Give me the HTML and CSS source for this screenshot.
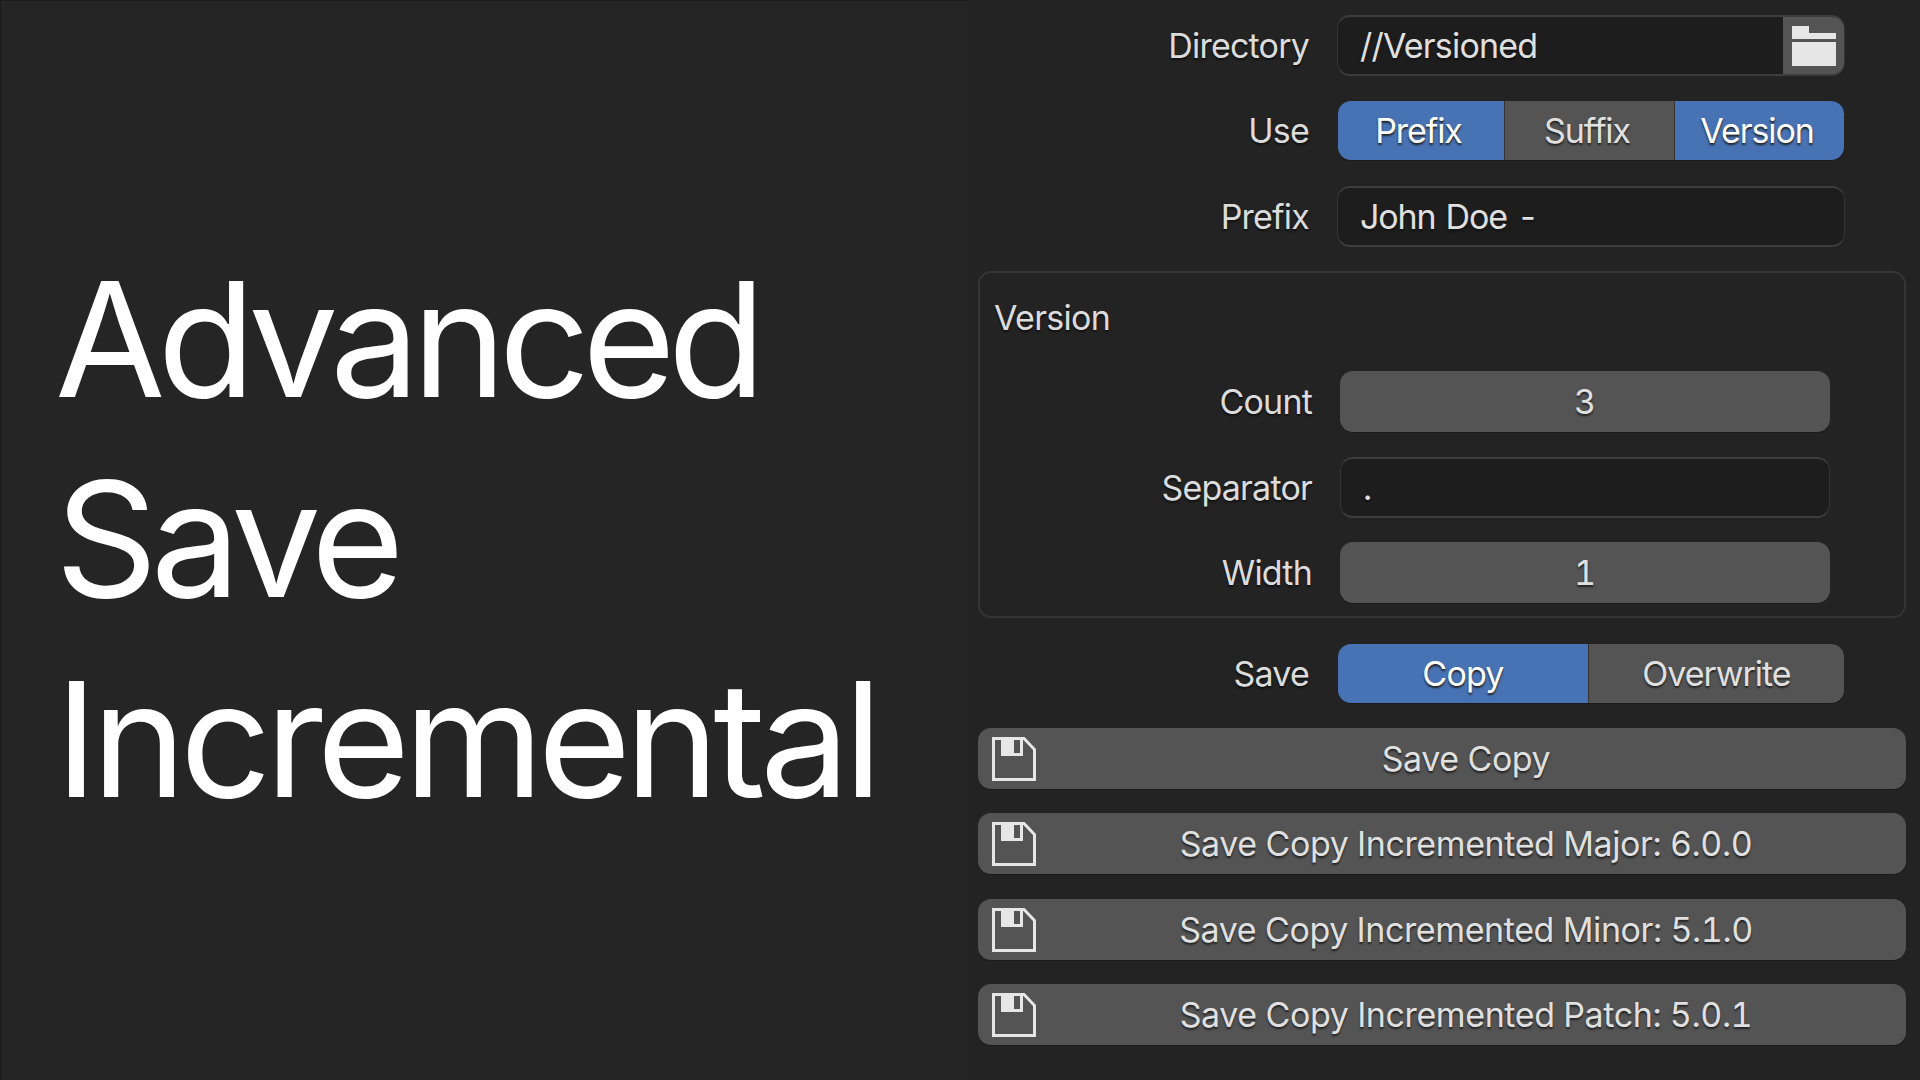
FILE: index.html
```html
<!DOCTYPE html>
<html lang="en">
<head>
    <meta charset="UTF-8">
    <meta name="viewport" content="width=device-width, initial-scale=1.0">
    <title>Advanced Save Incremental</title>
    <link rel="stylesheet" href="styles.css">
</head>
<body>
    <div class="page">
        <div class="intro">
            <h1>
                <span class="line line-tight">Advanced</span>
                <span class="line">Save</span>
                <span class="line line-loose">Incremental</span>
            </h1>
        </div>

        <div class="settings">
            <div class="row">
                <span class="label">Directory</span>
                <div class="control field dir-field">
                    <span class="field-text">//Versioned</span>
                    <span class="folder-btn">
                        <svg width="44" height="40" viewBox="0 0 44 40">
                            <path d="M0 0H17V7H44V13H0Z M0 16H44V40H0Z" fill="#e6e6e6"/>
                        </svg>
                    </span>
                </div>
            </div>
            <div class="row">
                <span class="label">Use</span>
                <div class="control segments seg-top">
                    <span class="seg active seg-prefix">Prefix</span>
                    <span class="seg seg-suffix">Suffix</span>
                    <span class="seg active seg-version">Version</span>
                </div>
            </div>
            <div class="row">
                <span class="label">Prefix</span>
                <div class="control field">
                    <span class="field-text wide-words">John Doe -</span>
                </div>
            </div>

            <div class="box">
                <div class="box-title">Version</div>
                <div class="row row-inner">
                    <span class="label">Count</span>
                    <div class="control num">3</div>
                </div>
                <div class="row row-inner">
                    <span class="label">Separator</span>
                    <div class="control field">
                        <span class="field-text">.</span>
                    </div>
                </div>
                <div class="row row-inner">
                    <span class="label">Width</span>
                    <div class="control num">1</div>
                </div>
            </div>

            <div class="row">
                <span class="label">Save</span>
                <div class="control segments">
                    <span class="seg active seg-copy">Copy</span>
                    <span class="seg seg-over">Overwrite</span>
                </div>
            </div>

            <button class="action">
                <svg class="floppy" width="44" height="44" viewBox="0 0 44 44">
                    <path d="M1.5 1.5H32L42.5 12.5V42.5H1.5Z" fill="none" stroke="#e6e6e6" stroke-width="3"/>
                    <path d="M9 1H31V19H9Z M22 3V16H28V3Z" fill="#e6e6e6" fill-rule="evenodd"/>
                </svg>
                <span>Save Copy</span>
            </button>
            <button class="action">
                <svg class="floppy" width="44" height="44" viewBox="0 0 44 44">
                    <path d="M1.5 1.5H32L42.5 12.5V42.5H1.5Z" fill="none" stroke="#e6e6e6" stroke-width="3"/>
                    <path d="M9 1H31V19H9Z M22 3V16H28V3Z" fill="#e6e6e6" fill-rule="evenodd"/>
                </svg>
                <span>Save Copy Incremented Major: 6.0.0</span>
            </button>
            <button class="action">
                <svg class="floppy" width="44" height="44" viewBox="0 0 44 44">
                    <path d="M1.5 1.5H32L42.5 12.5V42.5H1.5Z" fill="none" stroke="#e6e6e6" stroke-width="3"/>
                    <path d="M9 1H31V19H9Z M22 3V16H28V3Z" fill="#e6e6e6" fill-rule="evenodd"/>
                </svg>
                <span>Save Copy Incremented Minor: 5.1.0</span>
            </button>
            <button class="action">
                <svg class="floppy" width="44" height="44" viewBox="0 0 44 44">
                    <path d="M1.5 1.5H32L42.5 12.5V42.5H1.5Z" fill="none" stroke="#e6e6e6" stroke-width="3"/>
                    <path d="M9 1H31V19H9Z M22 3V16H28V3Z" fill="#e6e6e6" fill-rule="evenodd"/>
                </svg>
                <span>Save Copy Incremented Patch: 5.0.1</span>
            </button>
        </div>
    </div>
</body>
</html>
```

FILE: styles.css
```css
* {
    box-sizing: border-box;
}

html, body {
    margin: 0;
    height: 100%;
    background: #232323;
}

body {
    font-family: "Inter", "Liberation Sans", sans-serif;
    font-variant-numeric: tabular-nums;
    color: #e0e0e0;
}

.page {
    display: flex;
    width: 1920px;
    height: 1080px;
    overflow: hidden;
}

.intro {
    width: 967px;
    padding: 239px 0 0 55px;
    background: #252525;
    box-shadow: inset 1px 1px 0 #1b1b1b;
}

.intro h1 {
    margin: 0;
    font-size: 160px;
    font-weight: 400;
    letter-spacing: -7px;
    line-height: 200px;
    color: #ffffff;
}

.line {
    display: block;
}

.line-tight {
    letter-spacing: -7.8px;
}

.line-loose {
    letter-spacing: -6.2px;
}

.settings {
    flex: 1;
    display: flex;
    flex-direction: column;
    gap: 24.4px;
    padding: 15px 14px 0 11px;
    background: #232323;
}

.row {
    display: flex;
    align-items: center;
    gap: 27px;
    height: 61px;
}

.label {
    width: 332px;
    padding-right: 1px;
    text-align: right;
    font-size: 34px;
    letter-spacing: -0.8px;
    color: #dcdcdc;
    text-shadow: 0 2px 2px #111;
}

.control {
    width: 508px;
    height: 61px;
    border-radius: 13px;
    font-size: 34px;
    letter-spacing: -0.8px;
}

.field {
    display: flex;
    align-items: center;
    padding-left: 22px;
    background: #1d1d1d;
    border: 1px solid #333;
    border-top: 2px solid #3d3d3d;
    border-bottom: 2px solid #3d3d3d;
    overflow: hidden;
}

.field-text {
    flex: 1;
    text-shadow: 0 2px 2px #111;
}

.wide-words {
    letter-spacing: -1.1px;
    word-spacing: 2px;
}

.folder-btn {
    display: flex;
    align-items: center;
    justify-content: center;
    width: 61px;
    height: 61px;
    background: #545454;
}

.segments {
    display: flex;
    width: 506px;
    height: 59px;
    margin-left: 1px;
    overflow: hidden;
    box-shadow: 0 1px 0 #1a1a1a;
}

.seg {
    display: flex;
    align-items: center;
    justify-content: center;
    background: #545454;
    text-shadow: 0 2px 2px #222;
}

.seg.active {
    background: #4772b3;
    color: #fff;
}

.seg-top .seg {
    padding-right: 5px;
    letter-spacing: -1.1px;
}

.seg-prefix { width: 166px; }
.seg-suffix { width: 171px; border-left: 1px solid #333; border-right: 1px solid #333; }
.seg-version { width: 169px; }
.seg-copy { width: 250px; }
.seg-over { width: 256px; border-left: 1px solid #333; letter-spacing: -1px; }

.box {
    display: flex;
    flex-direction: column;
    justify-content: flex-end;
    gap: 24.4px;
    height: 347px;
    padding: 0 0 13px 0;
    border: 2px solid #353535;
    border-radius: 13px;
    position: relative;
}

.box-title {
    position: absolute;
    left: 14px;
    top: 24px;
    font-size: 34px;
    letter-spacing: -0.7px;
    color: #dcdcdc;
    text-shadow: 0 2px 2px #111;
}

.row-inner .label {
    width: 333px;
}

.row-inner .control {
    width: 490px;
}

.num {
    display: flex;
    align-items: center;
    justify-content: center;
    padding-right: 1px;
    background: #545454;
    text-shadow: 0 2px 2px #222;
    box-shadow: 0 1px 0 #1a1a1a;
}

.action {
    position: relative;
    display: flex;
    align-items: center;
    justify-content: center;
    height: 61px;
    width: 928px;
    padding: 0 0 0 48px;
    border: none;
    border-radius: 13px;
    background: #545454;
    color: #e0e0e0;
    font-family: inherit;
    font-size: 34px;
    font-variant-numeric: tabular-nums;
    letter-spacing: -0.4px;
    text-shadow: 0 2px 2px #222;
    box-shadow: 0 1px 0 #1a1a1a;
}

.floppy {
    position: absolute;
    left: 14px;
    top: 9px;
}
```
